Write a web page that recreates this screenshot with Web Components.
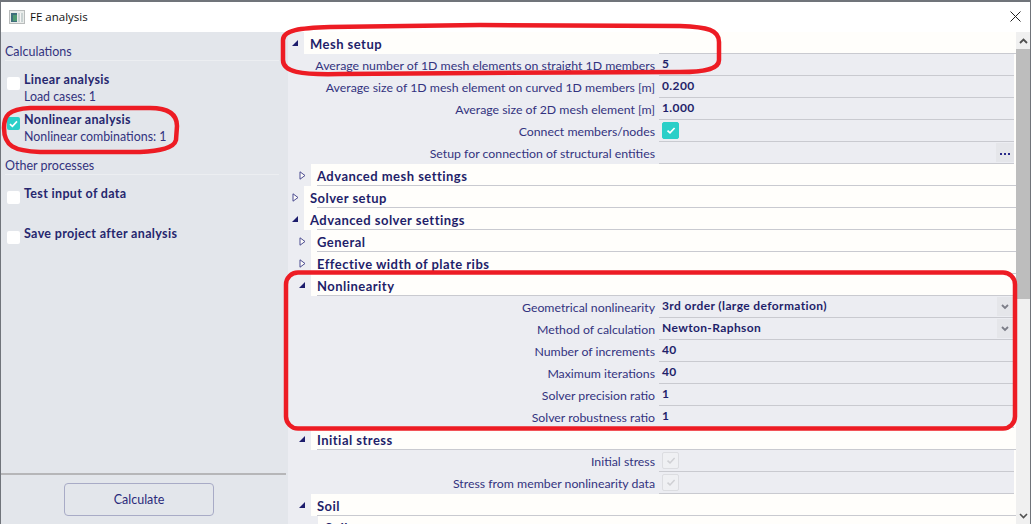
<!DOCTYPE html>
<html><head><meta charset="utf-8"><style>
html,body{margin:0;padding:0;height:524px;overflow:hidden;background:#fff}
</style></head><body>
<fe-app>
  <fe-titlebar slot="title">FE analysis</fe-titlebar>
  <fe-sidebar slot="side">
    <fe-group>Calculations</fe-group>
    <fe-option title-text="Linear analysis" sub="Load cases: 1"></fe-option>
    <fe-option title-text="Nonlinear analysis" sub="Nonlinear combinations: 1" checked></fe-option>
    <fe-group class="second">Other processes</fe-group>
    <fe-option title-text="Test input of data"></fe-option>
    <fe-option title-text="Save project after analysis"></fe-option>
  </fe-sidebar>
  <fe-tree slot="main">
    <fe-head level="0" open noline>Mesh setup</fe-head>
    <fe-row label="Average number of 1D mesh elements on straight 1D members">5</fe-row>
    <fe-row label="Average size of 1D mesh element on curved 1D members [m]">0.200</fe-row>
    <fe-row label="Average size of 2D mesh element [m]">1.000</fe-row>
    <fe-row label="Connect members/nodes"><fe-check on></fe-check></fe-row>
    <fe-row label="Setup for connection of structural entities" more></fe-row>
    <fe-head level="1">Advanced mesh settings</fe-head>
    <fe-head level="0">Solver setup</fe-head>
    <fe-head level="0" open>Advanced solver settings</fe-head>
    <fe-head level="1">General</fe-head>
    <fe-head level="1">Effective width of plate ribs</fe-head>
    <fe-head level="1" open>Nonlinearity</fe-head>
    <fe-row label="Geometrical nonlinearity" select>3rd order (large deformation)</fe-row>
    <fe-row label="Method of calculation" select>Newton-Raphson</fe-row>
    <fe-row label="Number of increments">40</fe-row>
    <fe-row label="Maximum iterations">40</fe-row>
    <fe-row label="Solver precision ratio">1</fe-row>
    <fe-row label="Solver robustness ratio">1</fe-row>
    <fe-head level="1" open>Initial stress</fe-head>
    <fe-row label="Initial stress"><fe-check></fe-check></fe-row>
    <fe-row label="Stress from member nonlinearity data"><fe-check></fe-check></fe-row>
    <fe-head level="1" open>Soil</fe-head>
    <fe-head level="2">Soil</fe-head>
  </fe-tree>
  <fe-scrollbar slot="scroll"></fe-scrollbar>
  <fe-annotations slot="over"></fe-annotations>
</fe-app>
<script>
const FONT = '"Lato","Open Sans",sans-serif';
function def(name, css, html){
  customElements.define(name, class extends HTMLElement{
    connectedCallback(){
      if(this.shadowRoot) return;
      const r=this.attachShadow({mode:'open'});
      r.innerHTML='<style>'+css+'</style>'+(typeof html==='function'?html(this):html);
    }
  });
}
const esc=s=>(s||'').replace(/&/g,'&amp;').replace(/</g,'&lt;');
def('fe-app',`
:host{display:grid;position:relative;width:1031px;height:524px;overflow:hidden;box-sizing:border-box;
 grid-template-columns:287px 1fr 14px;grid-template-rows:30px 1fr;
 border-top:2px solid #70747a;border-left:1px solid #70747a;border-right:1px solid #70747a;
 font-family:${FONT};background:#fff}
::slotted([slot=title]){grid-column:1/-1}
`,`<slot name="title"></slot><slot name="side"></slot><slot name="main"></slot><slot name="scroll"></slot><slot name="over"></slot>`);
def('fe-titlebar',`
:host{display:flex;align-items:center;height:30px;background:#fff;position:relative;font:11.5px "Open Sans",sans-serif;color:#111}
svg.i{margin:0 5px 0 8px;flex:none}
span{flex:1;position:relative;top:-1px}
svg.x{margin-right:9px;position:relative;top:-1px}
`,`<svg class="i" width="16" height="14" viewBox="0 0 16 14"><rect x=".5" y=".5" width="15" height="13" fill="#e9ecea" stroke="#b9bcbc"/><rect x="2" y="3" width="6" height="9" fill="#3f6f7c"/><rect x="4" y="5" width="4" height="6" fill="#4f9a72"/><rect x="9" y="3" width="5" height="9" fill="#c9d2d2"/><rect x="11" y="3" width="1" height="9" fill="#f5f5f5"/></svg><span><slot></slot></span><svg class="x" width="11" height="11" viewBox="0 0 11 11"><path d="M.5.5l10 10M10.5.5l-10 10" stroke="#222" fill="none" stroke-width="1"/></svg>`);
def('fe-sidebar',`
:host{display:flex;flex-direction:column;background:#e3e6eb;height:492px;box-sizing:border-box;position:relative;padding:12px 9px 0 4px}
.grow{flex:1}
.foot{height:51px;margin:0 -7px 0 -4px;border-top:2px solid #b6b6b8;display:flex;justify-content:center;padding:8px 9px 0 0;box-sizing:border-box}
button{width:150px;height:33px;box-sizing:border-box;background:transparent;border:1px solid #a8abc6;border-radius:4px;font:12.5px ${FONT};color:#2a2a7a;padding:0}
`,`<slot></slot><div class="grow"></div><div class="foot"><button>Calculate</button></div>`);
def('fe-group',`
:host{display:block;height:16px;line-height:16px;font-size:12.5px;color:#33337f;border-bottom:1px solid #eceef1;margin-bottom:10px}
:host(.second){margin-top:7px;margin-bottom:10px}
`,`<slot></slot>`);
def('fe-option',`
:host{display:flex;height:40px;color:#26266e;box-sizing:border-box;padding-left:2px}
.b{width:13px;height:13px;border-radius:2px;background:#fff;margin-top:6px;margin-right:4px;flex:none;display:flex;align-items:center;justify-content:center}
.b.on{background:#2bcfc8}
.t{font-weight:700;font-size:12.5px;line-height:17px;letter-spacing:.33px}
.s{font-size:12.4px;line-height:17px;color:#33337f}
`,el=>`<div class="b ${el.hasAttribute('checked')?'on':''}">${el.hasAttribute('checked')?'<svg width="9" height="8" viewBox="0 0 9 8"><path d="M1 4.2l2.4 2.2L8 1.4" stroke="#fff" stroke-width="1.6" fill="none"/></svg>':''}</div><div><div class="t">${esc(el.getAttribute('title-text'))}</div><div class="s">${esc(el.getAttribute('sub'))}</div></div>`);
def('fe-tree',`
:host{display:block;background:#fffefb;height:492px;overflow:hidden}
`,`<slot></slot>`);
def('fe-head',`
:host{display:flex;height:22px;background:#ecedf2;color:#1f1f6a;font-weight:700;font-size:13px;letter-spacing:.47px}
.ind{flex:none;position:relative}
svg{position:absolute}
.w{flex:1;background:#fffefb;padding-left:6px;display:flex;min-width:0}
.l{flex:1;border-bottom:1px solid #c9cad0;box-sizing:border-box;height:22px;padding-top:2px;line-height:21px}
:host([level="0"]) .ind{width:16px}
:host([level="1"]) .ind{width:23px}
:host([level="2"]) .ind{width:30px}
:host([level="0"]) .l{border-bottom:none;background:linear-gradient(#c9cad0,#c9cad0) 7px 21px/100% 1px no-repeat}
:host([noline]) .l{background:linear-gradient(#c9cad0,#c9cad0) 349px 21px/357px 1px no-repeat}
:host([level="2"]) .w{padding-left:0}
:host([level="2"]) .l{padding-left:7px;border:none}
`,el=>{
  const lv=+el.getAttribute('level'); const x=lv===0?4:11;
  const open=el.hasAttribute('open');
  const a=open?`<svg style="left:${x}px;top:8px" width="6" height="6" viewBox="0 0 6 6"><path d="M0 6L6 0V6Z" fill="#1c1c6c"/></svg>`
  :`<svg style="left:${x}px;top:7px" width="7" height="9" viewBox="0 0 7 9"><path d="M1 .8L6 4.5 1 8.2Z" fill="#fffefb" stroke="#4a4a90" stroke-width="1"/></svg>`;
  return `<div class="ind">${lv<2?a:''}</div><div class="w"><div class="l"><slot></slot></div></div>`;
});
def('fe-row',`
:host{display:grid;grid-template-columns:371px 1fr;height:22px;margin-right:2px;background:#ecedf2;font-size:12.3px}
.k{text-align:right;padding-right:4px;color:#33337f;line-height:23px;white-space:nowrap;overflow:hidden;box-sizing:border-box}
.v{position:relative;border-bottom:1px solid #c9cad0;box-sizing:border-box;padding-left:3px;color:#1f1f6a;font-weight:700;font-size:12px;line-height:20px;letter-spacing:.38px;height:22px}
.btn{position:absolute;right:0;top:1px;width:18px;height:19px;background:#e5e6ea;display:flex;align-items:center;justify-content:center}
`,el=>`<div class="k">${esc(el.getAttribute('label'))}</div><div class="v"><slot></slot>${el.hasAttribute('more')?'<div class="btn"><svg width="10" height="3" viewBox="0 0 10 3" style="margin-top:3px"><path d="M0 0h2v2H0zM4 0h2v2H4zM8 0h2v2H8z" fill="#2a2a8a"/></svg></div>':''}${el.hasAttribute('select')?'<div class="btn" style="top:1px;right:1px;width:16px"><svg width="8" height="6" viewBox="0 0 8 6"><path d="M1 1l3 3 3-3" stroke="#7c7e88" stroke-width="1.8" fill="none"/></svg></div>':''}</div>`);
def('fe-check',`
:host{display:flex;position:absolute;left:3px;top:2px;width:17px;height:17px;box-sizing:border-box;border-radius:2px;align-items:center;justify-content:center;border:1px solid #dcdde1;background:#eff0f3}
:host([on]){background:#2bcfc8;border-color:#2bcfc8}
`,el=>el.hasAttribute('on')?'<svg width="10" height="9" viewBox="0 0 10 9"><path d="M1.5 4.6l2.5 2.3L8.6 2" stroke="#fff" stroke-width="1.7" fill="none"/></svg>':'<svg width="10" height="9" viewBox="0 0 10 9"><path d="M1.5 4.6l2.5 2.3L8.6 2" stroke="#cfd0d4" stroke-width="1.5" fill="none"/></svg>');
def('fe-scrollbar',`
:host{display:flex;flex-direction:column;background:#f0f0f0;height:492px}
.a{height:17px;display:flex;align-items:center;justify-content:center;flex:none}
.t{height:250px;background:#bdbdbd;flex:none}
.f{flex:1}
`,`<div class="a"><svg width="9" height="6" viewBox="0 0 9 6"><path d="M1 5l3.5-3.5L8 5" stroke="#505050" stroke-width="1.8" fill="none"/></svg></div><div class="t"></div><div class="f"></div><div class="a"><svg width="9" height="6" viewBox="0 0 9 6"><path d="M1 1l3.5 3.5L8 1" stroke="#505050" stroke-width="1.6" fill="none"/></svg></div>`);
def('fe-annotations',`
:host{position:absolute;left:-1px;top:-2px;width:1031px;height:524px;pointer-events:none;display:block}
svg{display:block}
`,`<svg width="1031" height="524" viewBox="0 0 1031 524"><g fill="none" stroke="#ed1c24" stroke-width="4.5">
<path d="M283 40C283 30 300 28 330 27L480 25L680 26C708 27 719 30 719 42L719 60C719 68 708 72 680 72L480 73L340 74C300 75 283 72 283 60Z"/>
<path d="M4 128C4 116 8 109 30 108L150 108C168 108 177 114 177 126L176 140C174 148 160 151 140 152L40 152C14 151 4 146 4 128Z"/>
<path d="M298 272.5H1003A12 12 0 0 1 1015 284.5V416.5A12 12 0 0 1 1003 428.5H298A12 12 0 0 1 286 416.5V284.5A12 12 0 0 1 298 272.5Z"/>
</g><path d="M376 0h1v2h-1z" fill="#d818c8"/><path d="M397 0h6v1h-6z" fill="#222"/><path d="M411 0h3v1h-3zM418 0h5v1h-5z" fill="#3a5a9a"/></svg>`);
</script>
</body></html>
